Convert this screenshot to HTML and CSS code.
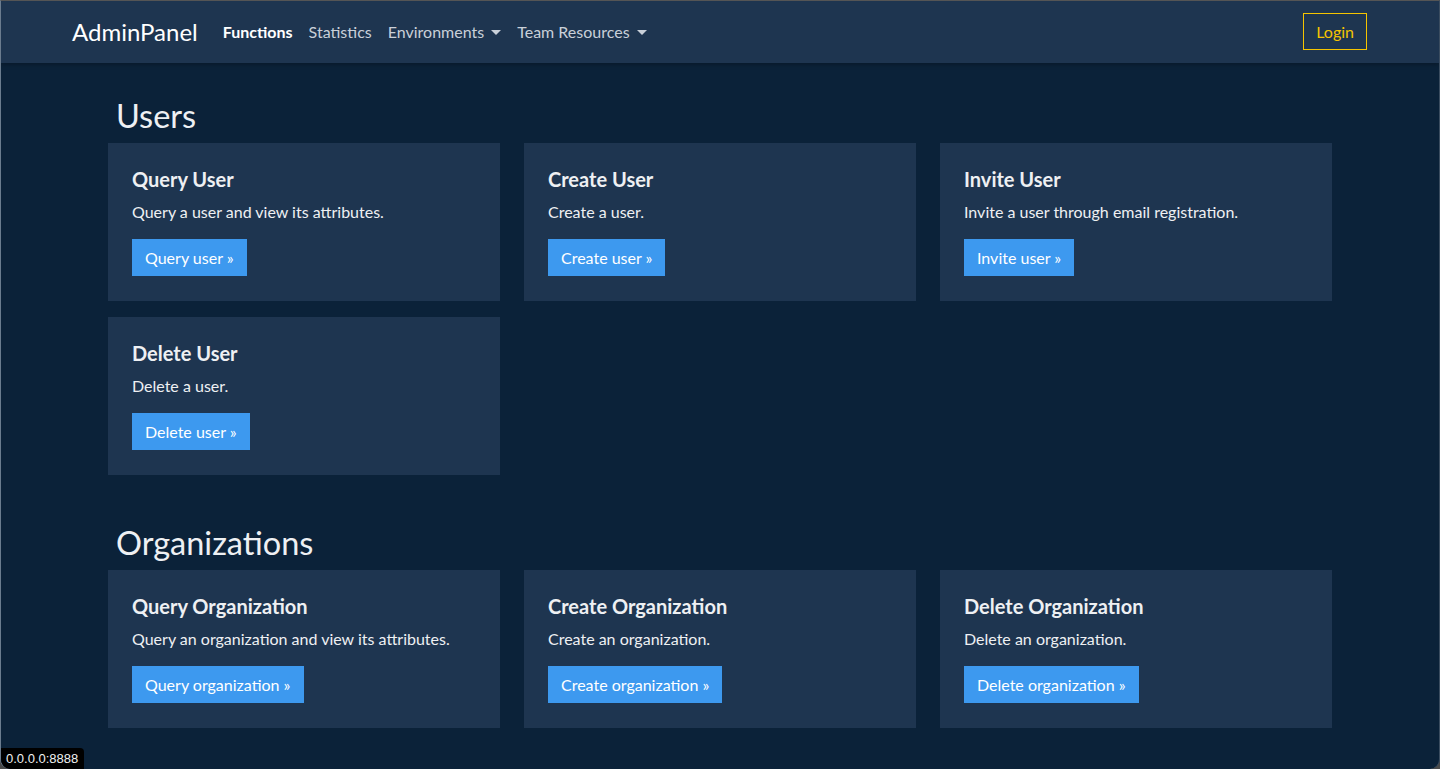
FILE: index.html
```html
<!DOCTYPE html>
<html lang="en">
<head>
<meta charset="utf-8">
<title>AdminPanel</title>
<link rel="stylesheet" href="styles.css">
</head>
<body>
<div class="frame">
  <nav class="navbar">
    <div class="nav-left">
      <a class="brand" href="#">AdminPanel</a>
      <ul class="nav-links">
        <li><a class="active" href="#">Functions</a></li>
        <li><a href="#">Statistics</a></li>
        <li><a class="dropdown" href="#">Environments</a></li>
        <li><a class="dropdown" href="#">Team Resources</a></li>
      </ul>
    </div>
    <a class="login" href="#">Login</a>
  </nav>
  <main class="container">
    <h2 class="section-title">Users</h2>
    <div class="grid">
      <div class="card">
        <h3>Query User</h3>
        <p>Query a user and view its attributes.</p>
        <a class="btn" href="#">Query user »</a>
      </div>
      <div class="card">
        <h3>Create User</h3>
        <p>Create a user.</p>
        <a class="btn" href="#">Create user »</a>
      </div>
      <div class="card">
        <h3>Invite User</h3>
        <p>Invite a user through email registration.</p>
        <a class="btn" href="#">Invite user »</a>
      </div>
      <div class="card">
        <h3>Delete User</h3>
        <p>Delete a user.</p>
        <a class="btn" href="#">Delete user »</a>
      </div>
    </div>
    <h2 class="section-title org">Organizations</h2>
    <div class="grid">
      <div class="card">
        <h3>Query Organization</h3>
        <p>Query an organization and view its attributes.</p>
        <a class="btn" href="#">Query organization »</a>
      </div>
      <div class="card">
        <h3>Create Organization</h3>
        <p>Create an organization.</p>
        <a class="btn" href="#">Create organization »</a>
      </div>
      <div class="card">
        <h3>Delete Organization</h3>
        <p>Delete an organization.</p>
        <a class="btn" href="#">Delete organization »</a>
      </div>
    </div>
  </main>
  <div class="status">0.0.0.0:8888</div>
</div>
</body>
</html>
```
FILE: styles.css
```css
* { box-sizing: border-box; }
html, body { margin: 0; padding: 0; height: 100%; }
body {
  background: #4a4a4a;
  font-family: Lato, "Open Sans", "Liberation Sans", sans-serif;
  color: #e8eaee;
  overflow: hidden;
}
.frame {
  position: relative;
  height: 769px;
  background: #0b2239;
  border-top: 1px solid #555;
  border-left: 1px solid #6b7c8e;
  border-right: 1px solid #3b4d60;
  border-radius: 0 0 10px 10px;
  overflow: hidden;
}
.navbar {
  height: 62px;
  background: #1e3550;
  display: flex;
  align-items: center;
  justify-content: space-between;
  padding: 0 72px 1px 71px;
  box-shadow: 0 2px 4px rgba(0,0,0,0.25);
}
.nav-left { display: flex; align-items: center; }
.brand {
  color: #ffffff;
  text-decoration: none;
  font-size: 24px;
  margin-right: 17px;
}
.nav-links { list-style: none; margin: 0; padding: 0; display: flex; }
.nav-links a {
  display: block;
  padding: 8px 8px;
  color: #c9d0d9;
  text-decoration: none;
  font-size: 16px;
}
.nav-links a.active { color: #ffffff; font-weight: 700; }
.dropdown::after {
  content: "";
  display: inline-block;
  margin-left: 7px;
  vertical-align: 3px;
  border-top: 5px solid #c9d0d9;
  border-left: 5px solid transparent;
  border-right: 5px solid transparent;
}
.login {
  display: block;
  color: #f5c400;
  border: 1px solid #f5c400;
  padding: 8px 12px;
  font-size: 16px;
  text-decoration: none;
  line-height: 19px;
}
.container {
  width: 1224px;
  margin: 0 auto;
  padding-top: 34px;
}
.section-title {
  font-weight: 400;
  font-size: 32.5px;
  line-height: 38px;
  margin: 0 0 8px 8px;
  color: #eef0f3;
}
.section-title.org { margin-top: 49px; margin-bottom: 8px; }
.grid {
  display: grid;
  grid-template-columns: repeat(3, 392px);
  column-gap: 24px;
  row-gap: 16px;
}
.card {
  background: #1e3550;
  padding: 24px;
  height: 158px;
}
.card h3 {
  margin: 0;
  font-size: 20px;
  font-weight: 700;
  line-height: 24px;
  color: #eef0f3;
}
.card p {
  margin: 9px 0 15px;
  font-size: 16px;
  line-height: 24px;
  color: #eef0f3;
}
.btn {
  display: inline-block;
  background: #3d99ef;
  color: #ffffff;
  text-decoration: none;
  font-size: 16px;
  line-height: 21px;
  padding: 8px 13px;
}
.status {
  position: absolute;
  left: 0;
  bottom: 0;
  background: #000;
  color: #f0f0f0;
  font-family: "Liberation Sans", Arial, sans-serif;
  font-size: 13px;
  line-height: 15px;
  padding: 3px 6px 3px 5px;
  border-top-right-radius: 4px;
}
```
